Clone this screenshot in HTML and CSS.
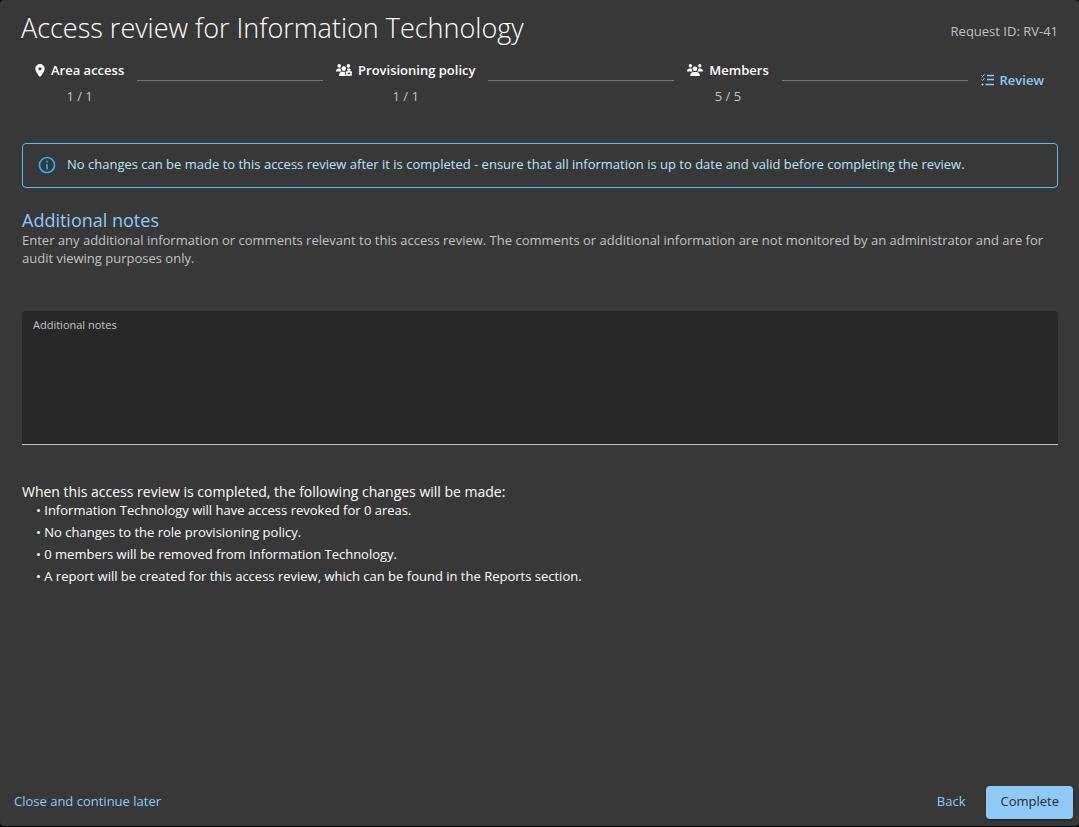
FILE: index.html
```html
<!DOCTYPE html>
<html lang="en">
<head>
  <meta charset="UTF-8">
  <meta name="viewport" content="width=device-width, initial-scale=1.0">
  <title>Access review for Information Technology</title>
  <link rel="stylesheet" href="styles.css">
</head>
<body>

<div class="dialog">
  <header class="dialog-header">
    <h1>Access review for Information Technology</h1>
    <span class="request-id">Request ID: RV-41</span>
  </header>

  <!-- Stepper -->
  <ol class="stepper">
    <li class="step">
      <span class="step-label">
        <svg class="icon-pin" viewBox="0 0 10 13" aria-hidden="true">
          <path fill-rule="evenodd" d="M5 0a4.7 4.7 0 0 0-4.7 4.7C.3 7.400 3.700 11.300 5 13c1.300-1.700 4.700-5.600 4.700-8.300A4.700 4.700 0 0 0 5 0zm0 3.200a1.600 1.600 0 1 1 0 3.200 1.600 1.600 0 0 1 0-3.200z"/>
        </svg>
        Area access
      </span>
      <span class="step-count">1 / 1</span>
    </li>
    <li class="line" aria-hidden="true"></li>
    <li class="step">
      <span class="step-label">
        <svg class="icon-group" viewBox="0 0 16 12" aria-hidden="true">
          <circle cx="3.200" cy="1.900" r="1.800"/>
          <circle cx="12.400" cy="1.900" r="1.800"/>
          <circle cx="7.800" cy="4.600" r="2.300"/>
          <path d="M0 7.400c0-1.800 1.100-2.900 2.700-2.900h1.400l.6.200a3.400 3.400 0 0 0 1 2.700zM10.900 4.700l.6-.2h1.200c1.300 0 2.200.8 2.500 2l-1.500-.4-2.500.4z"/>
          <path d="M3 12c0-2.700 1.300-4.200 3.500-4.200h2.700c-.5 1.500-.2 3.100.9 4.200z"/>
          <path fill-rule="evenodd" d="M12.200 6h1.400l.3 1 .9.400 1-.2.600 1.200-.7.700v.9l.7.700-.7 1.100-1-.2-.8.400-.3.900h-1.400l-.3-.9-.8-.4-1 .2-.6-1.100.7-.7v-.9l-.7-.7.600-1.200 1 .2.800-.4zm.7 2.400a1.100 1.100 0 1 0 0 2.200 1.100 1.100 0 0 0 0-2.200z"/>
        </svg>
        Provisioning policy
      </span>
      <span class="step-count">1 / 1</span>
    </li>
    <li class="line" aria-hidden="true"></li>
    <li class="step">
      <span class="step-label">
        <svg class="icon-group" viewBox="0 0 16 12" aria-hidden="true">
          <circle cx="3.400" cy="1.800" r="1.700"/>
          <circle cx="12.800" cy="1.800" r="1.700"/>
          <circle cx="8" cy="4.800" r="2.400"/>
          <path d="M0 7.400c0-1.800 1.100-2.900 2.700-2.900h1.500l.6.200a3.400 3.400 0 0 0 1 2.700zM16 7.400c0-1.800-1.100-2.900-2.700-2.900h-1.500l-.6.200a3.400 3.400 0 0 1-1 2.700z"/>
          <path d="M3.200 12c0-2.600 1.300-4 3.500-4h2.600c2.200 0 3.500 1.400 3.500 4z"/>
        </svg>
        Members
      </span>
      <span class="step-count">5 / 5</span>
    </li>
    <li class="line" aria-hidden="true"></li>
    <li class="step current" aria-current="step">
      <span class="step-label">
        <svg class="icon-list" viewBox="0 0 13 12" aria-hidden="true">
          <path d="M.5 1.500l1 1L3.600.3M.5 5.500l1 1 2.100-2.300"/>
          <path class="rows" d="M6 1.500h7M6 5.500h7M4.600 10.500H13"/>
          <circle cx="1.500" cy="10.500" r=".7"/>
        </svg>
        Review
      </span>
    </li>
  </ol>

  <main class="content">
    <div class="alert" role="note">
      <svg class="icon-info" viewBox="0 0 24 24" aria-hidden="true">
        <path d="M11 7h2v2h-2zm0 4h2v6h-2zm1-9C6.480 2 2 6.480 2 12s4.480 10 10 10 10-4.480 10-10S17.520 2 12 2zm0 18c-4.410 0-8-3.590-8-8s3.590-8 8-8 8 3.590 8 8-3.590 8-8 8z"/>
      </svg>
      <span>No changes can be made to this access review after it is completed - ensure that all information is up to date and valid before completing the review.</span>
    </div>

    <h2>Additional notes</h2>
    <p class="hint">Enter any additional information or comments relevant to this access review. The comments or additional information are not monitored by an administrator and are for audit viewing purposes only.</p>

    <div class="field">
      <label for="notes">Additional notes</label>
      <textarea id="notes"></textarea>
    </div>

    <h3>When this access review is completed, the following changes will be made:</h3>
    <ul class="changes">
      <li>Information Technology will have access revoked for 0 areas.</li>
      <li>No changes to the role provisioning policy.</li>
      <li>0 members will be removed from Information Technology.</li>
      <li>A report will be created for this access review, which can be found in the Reports section.</li>
    </ul>
  </main>

  <footer class="actions">
    <button type="button" class="btn btn-later">Close and continue later</button>
    <button type="button" class="btn">Back</button>
    <button type="button" class="btn btn-primary">Complete</button>
  </footer>
</div>

</body>
</html>
```
FILE: styles.css
```css
* { box-sizing: border-box; }

body {
  margin: 0;
  background: #000;
  color: #fff;
  font-family: "Open Sans", sans-serif;
  font-size: 13px;
  line-height: 18px;
}

h1, h2, h3, p, ul, ol {
  margin: 0;
  padding: 0;
}

.dialog {
  display: flex;
  flex-direction: column;
  min-height: calc(100vh - 1px);
  background: #383838;
  border-radius: 4px;
}

.dialog-header {
  display: flex;
  justify-content: space-between;
  align-items: center;
  padding: 8px 21px 0;
}

h1 {
  font-size: 27px;
  font-weight: 300;
  line-height: 40px;
}

.request-id {
  padding-top: 6px;
  color: #c3c3c3;
}

/* stepper */
.stepper {
  display: flex;
  align-items: center;
  gap: 13px;
  padding: 8px 35px 0;
  list-style: none;
}

.step {
  display: flex;
  flex-direction: column;
  align-items: center;
  gap: 4px;
}

.step-label {
  display: flex;
  align-items: center;
  gap: 6px;
  font-weight: 600;
  line-height: 28px;
}

.step-count {
  color: #c3c3c3;
  line-height: 16px;
}

.step svg { fill: currentColor; }

.icon-pin {
  width: 10px;
  height: 13px;
}

.icon-group {
  width: 16px;
  height: 12px;
}

.icon-list {
  width: 13px;
  height: 12px;
  stroke: currentColor;
}

.icon-list path { fill: none; }
.icon-list .rows { stroke-width: 1.5; }

.current { color: #90caf9; }

.line {
  flex: 1;
  height: 1px;
  background: #757575;
}

/* content */
.content {
  flex: 1;
  padding: 39px 21px 0 22px;
}

.alert {
  display: flex;
  gap: 10px;
  padding: 11px 14px 12px;
  border: 1px solid #4fc3f7;
  border-radius: 4px;
  color: #b8e7fb;
}

.icon-info {
  flex: none;
  width: 20px;
  height: 20px;
  fill: #29b6f6;
}

h2 {
  margin-top: 21px;
  color: #90caf9;
  font-size: 18px;
  font-weight: 400;
  line-height: 22px;
}

.hint { color: #c3c3c3; }

.field {
  margin: 44px 0 38px;
  background: #282828;
  border-bottom: 1px solid #c3c3c3;
  border-radius: 4px 4px 0 0;
}

.field label {
  display: block;
  padding: 6px 11px 0;
  color: #c3c3c3;
  font-size: 11px;
  line-height: 16px;
}

.field textarea {
  display: block;
  width: 100%;
  height: 111px;
  padding: 4px 11px;
  background: none;
  border: 0;
  outline: 0;
  color: #fff;
  font: inherit;
  resize: none;
}

h3 {
  font-size: 14px;
  font-weight: 400;
  line-height: 18px;
}

.changes {
  display: flex;
  flex-direction: column;
  gap: 4px;
  padding-left: 14px;
  list-style: none;
}

.changes li::before { content: "• "; }

/* actions */
.actions {
  display: flex;
  align-items: center;
  gap: 7px;
  padding: 7px 6px 7px 0;
}

.btn {
  padding: 6px 14px 9px;
  background: none;
  border: 0;
  border-radius: 4px;
  color: #90caf9;
  font: inherit;
  cursor: pointer;
}

.btn-later { margin-right: auto; }

.btn-primary {
  background: #90caf9;
  color: #1f2a33;
  box-shadow: 0 2px 3px rgba(0, 0, 0, 0.3);
}
```
